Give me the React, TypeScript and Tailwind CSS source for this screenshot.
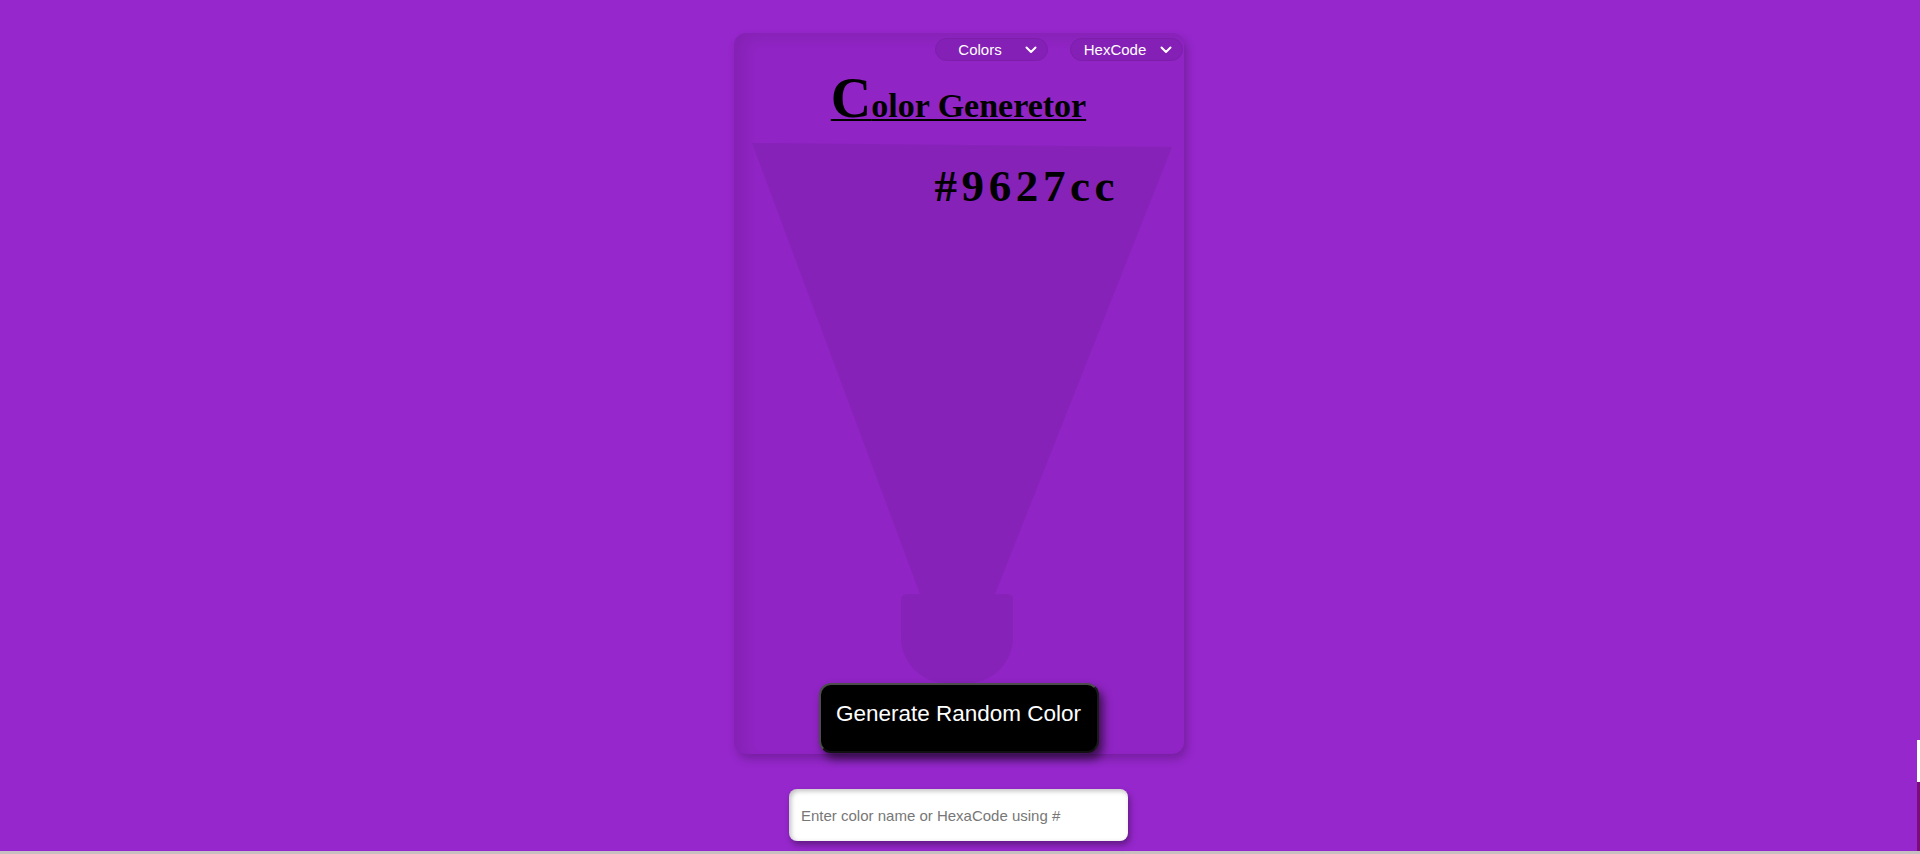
import React, { useState } from "react";

function Chevron() {
  return (
    <svg width="12" height="8" viewBox="0 0 12 8" fill="none" className="shrink-0">
      <path d="M1.5 1.5 6 6l4.5-4.5" stroke="white" strokeWidth="2" strokeLinecap="round" strokeLinejoin="round" />
    </svg>
  );
}

function Dropdown({ label }: { label: string }) {
  return (
    <div className="flex h-[23px] w-[113px] items-center rounded-full border border-[#7d1eab] bg-[#8420b5] pr-[10px] text-[15px] text-white">
      <span className="flex-1 text-center leading-none">{label}</span>
      <Chevron />
    </div>
  );
}

export default function App() {
  const [value, setValue] = useState<string>("");

  return (
    <div className="flex h-[854px] w-full flex-col overflow-hidden bg-[#c7c0c0] font-['Liberation_Sans',Arial,sans-serif]">
      <div className="flex h-[851px] w-full">
        <main className="flex flex-1 flex-col items-center bg-[#9627cc] pt-[33px]">
          <div className="relative flex h-[721px] w-[450px] flex-col items-center rounded-xl bg-[#9024c4] shadow-[3px_5px_10px_rgba(0,0,0,0.22),inset_12px_6px_12px_rgba(0,0,0,0.07)]">
            {/* light beam */}
            <svg className="pointer-events-none absolute inset-0" width="450" height="721" viewBox="0 0 450 721">
              <polygon points="18,110 438,114 261,561 186,561" fill="#8722b9" />
              <path
                d="M173 561 H273 Q279 561 279 567 V604 A45 46 0 0 1 234 650 H212 A45 46 0 0 1 167 604 V567 Q167 561 173 561 Z"
                fill="#8722b9"
              />
            </svg>

            <div className="relative z-10 mt-[5px] mr-[1px] flex gap-[22px] self-end">
              <Dropdown label="Colors" />
              <Dropdown label="HexCode" />
            </div>

            <h1 className="relative z-10 mt-[9px] font-['Liberation_Serif','Times_New_Roman',serif] text-[34px] font-bold leading-none text-black underline decoration-2 underline-offset-[2px]">
              <span className="text-[56px] font-bold">C</span>olor Generetor
            </h1>

            <p className="relative z-10 mt-[38px] ml-[201px] self-start font-['Liberation_Serif','Times_New_Roman',serif] text-[45px] font-bold leading-none tracking-[4.6px] text-black">
              #9627cc
            </p>

            <button className="relative z-10 mt-auto mb-[1px] flex h-[70px] w-[280px] items-center justify-center rounded-xl border-2 border-t-[#4d4d4d] border-l-[#4d4d4d] border-r-[#1a1a1a] border-b-[#111] bg-black pb-[8px] text-[22.5px] text-white shadow-[4px_6px_10px_rgba(0,0,0,0.6)]">
              Generate Random Color
            </button>
          </div>

          <input
            value={value}
            onChange={(e) => setValue(e.target.value)}
            placeholder="Enter color name or HexaCode using #"
            className="mt-[35px] h-[52px] w-[339px] rounded-lg bg-white px-[12px] text-[15px] text-black outline-none placeholder:text-[#777] shadow-[inset_2px_2px_5px_rgba(0,0,0,0.25),2px_4px_6px_rgba(0,0,0,0.35)]"
          />
        </main>
        <div className="flex w-[3px] flex-col">
          <div className="h-[740px] bg-[#9627cc]" />
          <div className="h-[42px] bg-white" />
          <div className="flex-1 bg-[#7c0b7c]" />
        </div>
      </div>
    </div>
  );
}
